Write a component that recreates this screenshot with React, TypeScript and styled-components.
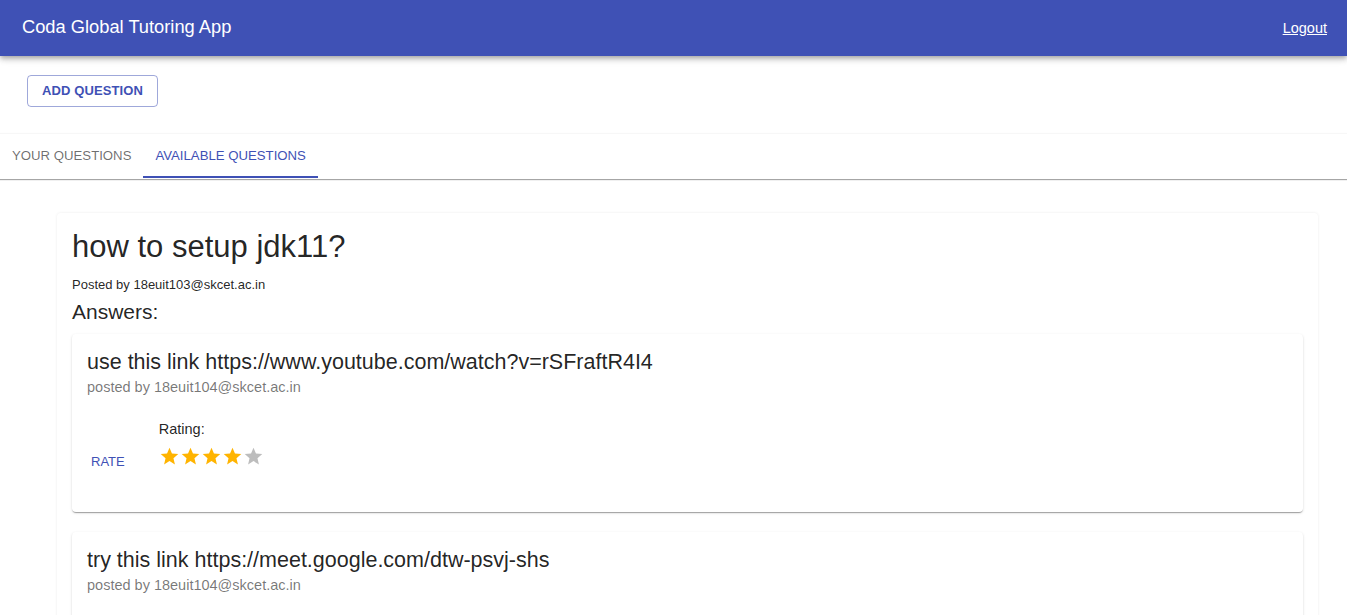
import React from "react";
import styled, { createGlobalStyle } from "styled-components";

const GlobalStyle = createGlobalStyle`
  html, body {
    margin: 0;
    padding: 0;
    background: #ffffff;
    font-family: "Liberation Sans", Arial, sans-serif;
    color: rgba(0, 0, 0, 0.87);
  }
  * { box-sizing: border-box; }
`;

const AppBar = styled.header`
  height: 56px;
  background: #3f51b5;
  color: #ffffff;
  display: flex;
  align-items: center;
  justify-content: space-between;
  padding: 0 20px 0 22px;
  box-shadow: 0px 2px 4px -1px rgba(0, 0, 0, 0.2), 0px 4px 5px 0px rgba(0, 0, 0, 0.14),
    0px 1px 10px 0px rgba(0, 0, 0, 0.12);
  position: relative;
  z-index: 2;
`;

const AppTitle = styled.div`
  font-size: 18.3px;
  line-height: 22px;
  margin-top: -2px;
`;

const LogoutLink = styled.a`
  color: #ffffff;
  font-size: 14.5px;
  text-decoration: underline;
  cursor: pointer;
`;

const Toolbar = styled.div`
  padding: 19px 27px 27px;
`;

const OutlinedButton = styled.button`
  height: 32px;
  padding: 0 14px 1px;
  border: 1px solid rgba(63, 81, 181, 0.5);
  border-radius: 4px;
  background: transparent;
  color: #3f51b5;
  font-family: inherit;
  font-size: 13px;
  font-weight: 700;
  letter-spacing: 0.1px;
  text-transform: uppercase;
  cursor: pointer;
`;

const TabsBar = styled.nav`
  display: flex;
  height: 45px;
  background: #ffffff;
  box-shadow: 0 1px 1px rgba(0, 0, 0, 0.35), 0 -1px 1px rgba(0, 0, 0, 0.03);
`;

const Tab = styled.button<{ $active?: boolean }>`
  position: relative;
  height: 44px;
  padding: 0 12px 2px;
  border: none;
  background: transparent;
  font-family: inherit;
  font-size: 13.2px;
  text-transform: uppercase;
  color: ${(p) => (p.$active ? "#3f51b5" : "rgba(0, 0, 0, 0.58)")};
  cursor: pointer;
  &::after {
    content: "";
    position: absolute;
    left: 0;
    right: 0;
    bottom: 0;
    height: 2px;
    background: ${(p) => (p.$active ? "#3f51b5" : "transparent")};
  }
`;

const Main = styled.main`
  padding: 34px 29px 40px 57px;
`;

const QuestionCard = styled.section`
  background: #ffffff;
  border-radius: 4px;
  padding: 15px 15px 20px 15px;
  box-shadow: 0 0 3px rgba(0, 0, 0, 0.08);
`;

const QuestionTitle = styled.h2`
  margin: 0;
  font-size: 31px;
  font-weight: 400;
  line-height: 38px;
`;

const PostedBy = styled.div`
  margin-top: 10px;
  font-size: 13px;
  line-height: 18px;
`;

const AnswersHeading = styled.h3`
  margin: 5px 0 0;
  font-size: 21px;
  font-weight: 400;
  line-height: 25px;
`;

const AnswerList = styled.div`
  margin-top: 10px;
  display: flex;
  flex-direction: column;
  gap: 20px;
`;

const AnswerCard = styled.article`
  background: #ffffff;
  border-radius: 4px;
  padding: 15px 15px 34px;
  box-shadow: 0px 2px 1px -1px rgba(0, 0, 0, 0.2), 0px 1px 1px 0px rgba(0, 0, 0, 0.14),
    0px 1px 3px 0px rgba(0, 0, 0, 0.12);
`;

const AnswerText = styled.div`
  font-size: 21.5px;
  line-height: 26px;
`;

const AnswerAuthor = styled.div`
  margin-top: 2px;
  font-size: 14.5px;
  line-height: 20px;
  color: rgba(0, 0, 0, 0.54);
`;

const RatingRow = styled.div`
  margin-top: 22px;
  display: flex;
  align-items: flex-start;
  gap: 30px;
`;

const RateButton = styled.button`
  margin-top: 27px;
  padding: 6px 4px;
  border: none;
  background: transparent;
  color: #3f51b5;
  font-family: inherit;
  font-size: 13px;
  line-height: 20px;
  text-transform: uppercase;
  cursor: pointer;
`;

const RatingGroup = styled.div`
  display: flex;
  flex-direction: column;
  gap: 7px;
`;

const RatingLabel = styled.div`
  font-size: 14.5px;
  line-height: 20px;
`;

const Stars = styled.div`
  display: flex;
  height: 21px;
`;

const StarIcon = styled.svg<{ $filled: boolean }>`
  width: 21px;
  height: 21px;
  fill: ${(p) => (p.$filled ? "#ffb400" : "#bdbdbd")};
`;

const Star = ({ filled }: { filled: boolean }) => (
  <StarIcon $filled={filled} viewBox="0 0 24 24" aria-hidden="true">
    <path d="M12 17.27L18.18 21l-1.64-7.03L22 9.24l-7.19-.61L12 2 9.19 8.63 2 9.24l5.46 4.73L5.82 21z" />
  </StarIcon>
);

type Answer = { text: string; author: string; rating: number };

const answers: Answer[] = [
  {
    text: "use this link https://www.youtube.com/watch?v=rSFraftR4I4",
    author: "18euit104@skcet.ac.in",
    rating: 4,
  },
  {
    text: "try this link https://meet.google.com/dtw-psvj-shs",
    author: "18euit104@skcet.ac.in",
    rating: 3,
  },
];

export default function App() {
  return (
    <>
      <GlobalStyle />
      <AppBar>
        <AppTitle>Coda Global Tutoring App</AppTitle>
        <LogoutLink>Logout</LogoutLink>
      </AppBar>
      <Toolbar>
        <OutlinedButton>Add Question</OutlinedButton>
      </Toolbar>
      <TabsBar>
        <Tab>Your Questions</Tab>
        <Tab $active>Available Questions</Tab>
      </TabsBar>
      <Main>
        <QuestionCard>
          <QuestionTitle>how to setup jdk11?</QuestionTitle>
          <PostedBy>Posted by 18euit103@skcet.ac.in</PostedBy>
          <AnswersHeading>Answers:</AnswersHeading>
          <AnswerList>
            {answers.map((a, i) => (
              <AnswerCard key={i}>
                <AnswerText>{a.text}</AnswerText>
                <AnswerAuthor>posted by {a.author}</AnswerAuthor>
                <RatingRow>
                  <RateButton>Rate</RateButton>
                  <RatingGroup>
                    <RatingLabel>Rating:</RatingLabel>
                    <Stars>
                      {[1, 2, 3, 4, 5].map((n) => (
                        <Star key={n} filled={n <= a.rating} />
                      ))}
                    </Stars>
                  </RatingGroup>
                </RatingRow>
              </AnswerCard>
            ))}
          </AnswerList>
        </QuestionCard>
      </Main>
    </>
  );
}
